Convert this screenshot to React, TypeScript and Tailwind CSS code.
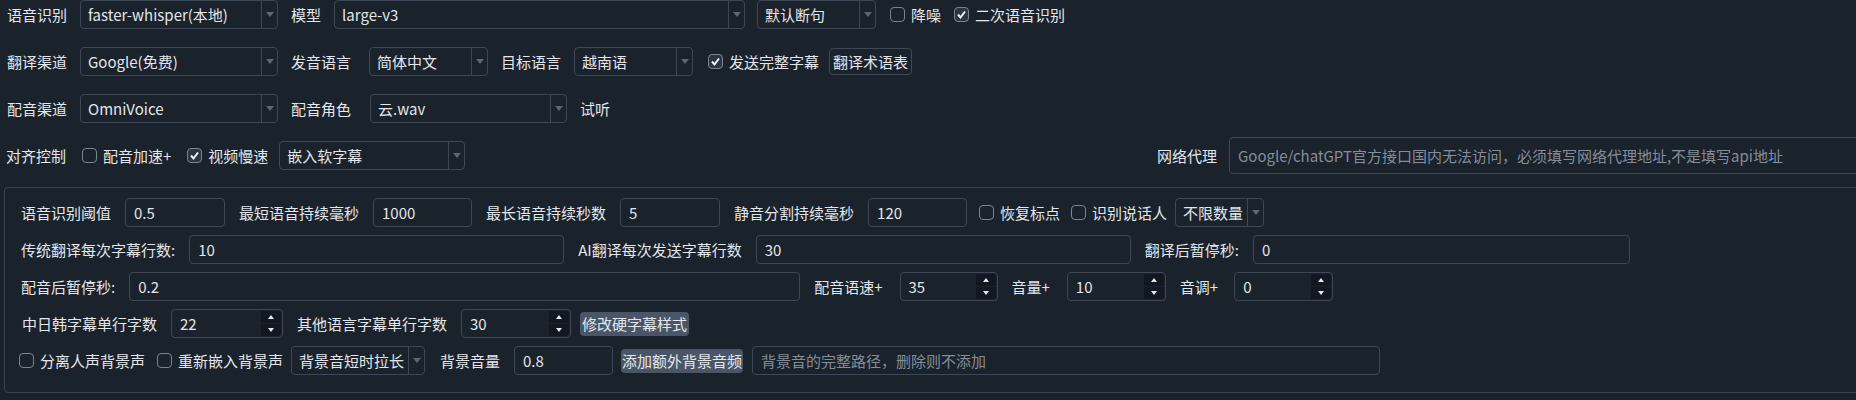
import React from "react";

const box = "h-[29px] shrink-0 rounded-[4px] border border-[#3d4756]";

function Arrow() {
  return (
    <svg width="8" height="5" viewBox="0 0 8 5">
      <polygon points="0,0 8,0 4,5" fill="#5c6674" />
    </svg>
  );
}

function Combo({ text, className }: { text: string; className: string }) {
  return (
    <div className={`flex ${box} ${className}`}>
      <div className="flex flex-1 items-center overflow-hidden whitespace-nowrap pl-[7px]">{text}</div>
      <div className="flex w-[16px] items-center justify-center border-l border-[#3d4756]">
        <Arrow />
      </div>
    </div>
  );
}

function Field({ value, placeholder, className }: { value?: string; placeholder?: string; className: string }) {
  return (
    <div className={`flex items-center overflow-hidden whitespace-nowrap pl-[8px] ${box} ${className}`}>
      {value ? value : <span className="text-[#858d98]">{placeholder}</span>}
    </div>
  );
}

function Spin({ value, className }: { value: string; className: string }) {
  return (
    <div className={`flex ${box} ${className}`}>
      <div className="flex flex-1 items-center pl-[8px]">{value}</div>
      <div className="my-[1px] mr-[1px] flex w-[20px] flex-col gap-[1px]">
        <div className="flex flex-1 items-center justify-center rounded-tr-[3px] bg-[#111820]">
          <svg width="6" height="4" viewBox="0 0 6 4">
            <polygon points="0,4 6,4 3,0" fill="#e5e7eb" />
          </svg>
        </div>
        <div className="flex flex-1 items-center justify-center rounded-br-[3px] bg-[#111820]">
          <svg width="6" height="4" viewBox="0 0 6 4">
            <polygon points="0,0 6,0 3,4" fill="#e5e7eb" />
          </svg>
        </div>
      </div>
    </div>
  );
}

function Check({ label, checked = false, className = "" }: { label: string; checked?: boolean; className?: string }) {
  return (
    <div className={`flex shrink-0 items-center gap-[6px] ${className}`}>
      <div
        className={`flex h-[15px] w-[15px] items-center justify-center rounded-[4px] border-[1.5px] border-[#7b8491] ${
          checked ? "bg-[#2c3541]" : ""
        }`}
      >
        {checked && (
          <svg width="11" height="11" viewBox="0 0 11 11">
            <polyline points="2,5.5 4.5,8.5 9,2.5" fill="none" stroke="#f3f4f6" strokeWidth="2" />
          </svg>
        )}
      </div>
      <span className="whitespace-nowrap">{label}</span>
    </div>
  );
}

function L({ children, className = "" }: { children: React.ReactNode; className?: string }) {
  return <span className={`shrink-0 whitespace-nowrap ${className}`}>{children}</span>;
}

export default function App() {
  return (
    <div className="h-[400px] w-full overflow-hidden bg-[#1a222c] font-['Noto_Sans_CJK_SC',sans-serif] text-[15px] leading-none text-[#e3e6ea]">
      <div className="flex w-[1880px] flex-col">
        <div className="flex h-[29px] items-center gap-[13px] pl-[7px]">
          <L>语音识别</L>
          <Combo text="faster-whisper(本地)" className="w-[198px]" />
          <L>模型</L>
          <Combo text="large-v3" className="w-[411px]" />
          <Combo text="默认断句" className="ml-[-1px] w-[119px]" />
          <Check label="降噪" className="ml-[1px]" />
          <Check label="二次语音识别" checked />
        </div>

        <div className="mt-[18px] flex h-[29px] items-center gap-[13px] pl-[7px]">
          <L>翻译渠道</L>
          <Combo text="Google(免费)" className="w-[198px]" />
          <L>发音语言</L>
          <Combo text="简体中文" className="ml-[5px] w-[119px]" />
          <L>目标语言</L>
          <Combo text="越南语" className="w-[119px]" />
          <Check label="发送完整字幕" checked className="ml-[2px]" />
          <div className="ml-[-3px] flex h-[27px] items-center rounded-[4px] border border-[#3d4756] px-[3px]">
            翻译术语表
          </div>
        </div>

        <div className="mt-[18px] flex h-[29px] items-center gap-[13px] pl-[7px]">
          <L>配音渠道</L>
          <Combo text="OmniVoice" className="w-[198px]" />
          <L>配音角色</L>
          <Combo text="云.wav" className="ml-[6px] w-[197px]" />
          <L>试听</L>
        </div>

        <div className="mt-[18px] flex h-[29px] items-center gap-[16px] pl-[6px] pr-[10px]">
          <L>对齐控制</L>
          <Check label="配音加速+" />
          <Check label="视频慢速" checked />
          <Combo text="嵌入软字幕" className="ml-[-5px] w-[186px]" />
          <div className="flex-1" />
          <L>网络代理</L>
          <Field
            placeholder="Google/chatGPT官方接口国内无法访问，必须填写网络代理地址,不是填写api地址"
            className="ml-[-4px] h-[37px] w-[641px]"
          />
        </div>

        <div className="ml-[4px] mt-[17px] flex h-[206px] w-[1866px] flex-col gap-[8px] rounded-[4px] border border-[#3a4452] pl-[16px] pt-[10px]">
          <div className="flex h-[29px] items-center gap-[14px]">
            <L>语音识别阈值</L>
            <Field value="0.5" className="w-[100px]" />
            <L>最短语音持续毫秒</L>
            <Field value="1000" className="w-[99px]" />
            <L>最长语音持续秒数</L>
            <Field value="5" className="w-[100px]" />
            <L>静音分割持续毫秒</L>
            <Field value="120" className="w-[99px]" />
            <Check label="恢复标点" className="ml-[-2px]" />
            <Check label="识别说话人" className="ml-[-3px]" />
            <Combo text="不限数量" className="ml-[-6px] w-[89px]" />
          </div>

          <div className="flex h-[29px] items-center gap-[14px]">
            <L>传统翻译每次字幕行数:</L>
            <Field value="10" className="w-[375px]" />
            <L>AI翻译每次发送字幕行数</L>
            <Field value="30" className="w-[375px]" />
            <L>翻译后暂停秒:</L>
            <Field value="0" className="w-[377px]" />
          </div>

          <div className="flex h-[29px] items-center gap-[14px]">
            <L>配音后暂停秒:</L>
            <Field value="0.2" className="w-[671px]" />
            <L>配音语速+</L>
            <Spin value="35" className="ml-[3px] w-[98px]" />
            <L>音量+</L>
            <Spin value="10" className="ml-[3px] w-[99px]" />
            <L>音调+</L>
            <Spin value="0" className="ml-[2px] w-[99px]" />
          </div>

          <div className="flex h-[29px] items-center gap-[14px]">
            <L className="ml-[1px]">中日韩字幕单行字数</L>
            <Spin value="22" className="w-[112px]" />
            <L>其他语言字幕单行字数</L>
            <Spin value="30" className="w-[110px]" />
            <div className="ml-[-5px] flex h-[24px] items-center rounded-[4px] bg-[#4a5667] px-[2px]">修改硬字幕样式</div>
          </div>

          <div className="flex h-[29px] items-center gap-[9px]">
            <Check label="分离人声背景声" className="ml-[-2px]" />
            <Check label="重新嵌入背景声" className="ml-[3px]" />
            <Combo text="背景音短时拉长" className="ml-[-1px] w-[134px]" />
            <L className="ml-[6px]">背景音量</L>
            <Field value="0.8" className="ml-[5px] w-[99px]" />
            <div className="ml-[-1px] flex h-[24px] items-center rounded-[4px] bg-[#4a5667] px-[1px]">添加额外背景音频</div>
            <Field placeholder="背景音的完整路径，删除则不添加" className="w-[628px]" />
          </div>
        </div>
      </div>
    </div>
  );
}
